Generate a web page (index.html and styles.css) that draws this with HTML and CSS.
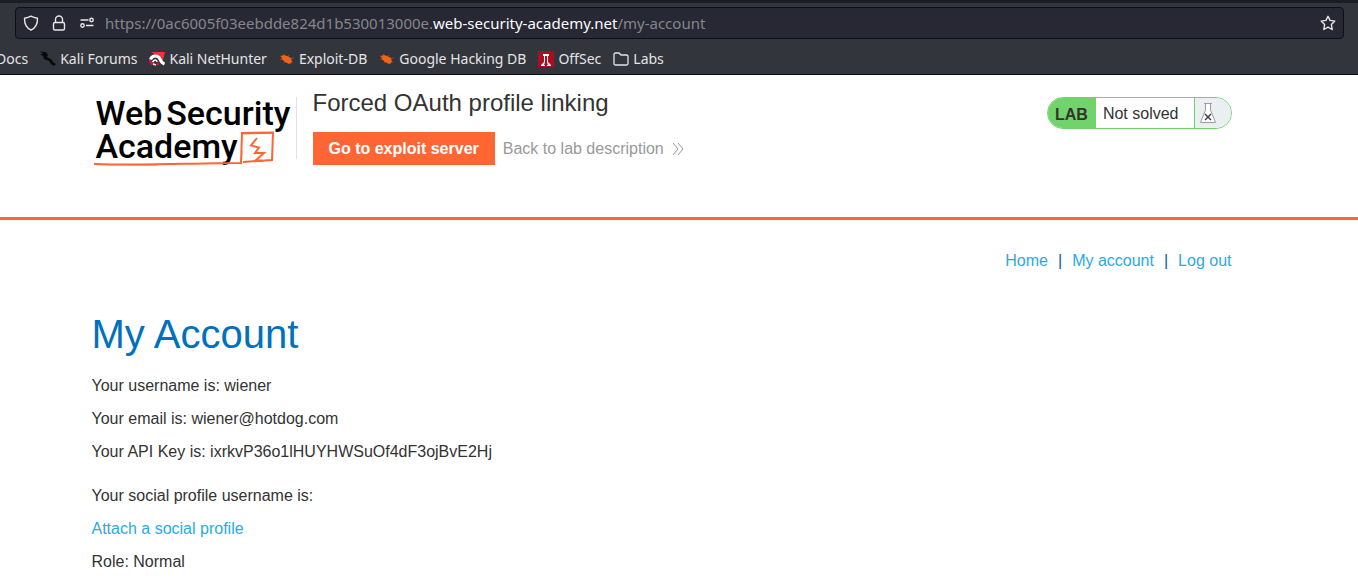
FILE: index.html
```html
<!DOCTYPE html>
<html lang="en">
<head>
<meta charset="utf-8">
<title>Forced OAuth profile linking</title>
<link rel="stylesheet" href="styles.css">
</head>
<body>
<div class="browser">
  <div class="address">
    <svg class="icon" viewBox="0 0 16 16" aria-hidden="true"><path d="M8 1.200C6 2.300 3.600 2.900 1.500 3.200C1.400 8.500 3 12.800 8 15C13 12.800 14.600 8.500 14.500 3.200C12.400 2.900 10 2.300 8 1.200Z"/></svg>
    <svg class="icon" viewBox="0 0 16 16" aria-hidden="true"><rect x="2.500" y="7.500" width="11" height="7.500" rx="1.500"/><path d="M4.500 7.500V4.500a3.500 3.500 0 0 1 7 0v3"/></svg>
    <svg class="icon" viewBox="0 0 16 16" aria-hidden="true"><path d="M1.500 5h8M7 10.500h7.500"/><circle cx="12.500" cy="5" r="1.700"/><circle cx="3.500" cy="10.500" r="1.700"/></svg>
    <div class="url" role="textbox" aria-label="Address" contenteditable="true" spellcheck="false">https://0ac6005f03eebdde824d1b530013000e.<span class="domain">web-security-academy.net</span>/my-account</div>
    <button class="star" type="button" aria-label="Bookmark this page"><svg class="icon" viewBox="0 0 16 16" aria-hidden="true"><path d="M8 1.300L10 5.400L14.800 6.100L11.400 9.500L12.200 14.500L8 12.200L3.800 14.500L4.600 9.500L1.200 6.100L6 5.400Z"/></svg></button>
  </div>
  <nav class="bookmarks" aria-label="Bookmarks">
    <a class="bookmark" href="#">Docs</a>
    <a class="bookmark" href="#"><svg viewBox="0 0 16 16" aria-hidden="true"><path fill="#08090b" d="M0 0L3 1L6 1L8 4L7 6L11 8L13 11L16 13L14 15L11 13L9 10L4 8L3 5L0 3L3 3Z"/></svg>Kali Forums</a>
    <a class="bookmark" href="#"><svg viewBox="0 0 16 16" aria-hidden="true"><path fill="#f0343d" d="M2 1H16L13 13L7 4Z"/><path fill="#d20f39" d="M0 7L6 14L10 11V14H2L0 11Z"/><path d="M1.500 8.500C3 4 9 4 11 8C12 11 13 12 15.500 13" fill="none" stroke="#fff" stroke-width="3"/><path d="M3.500 11C6 7.500 8 9 8 11M4 13L7 14" fill="none" stroke="#fff" stroke-width="1.500"/></svg>Kali NetHunter</a>
    <a class="bookmark" href="#"><svg viewBox="0 0 16 16" aria-hidden="true"><path d="M1 8L14 11M4 3L12 13M10 4L5 12M1 5L8 7M9 8L15 7" stroke="#8f4a2c"/><path fill="#ee6515" d="M2 5L5 4L8 5L12 7L13 11L10 13L6 11L3 8Z"/></svg>Exploit-DB</a>
    <a class="bookmark" href="#"><svg viewBox="0 0 16 16" aria-hidden="true"><path d="M1 8L14 11M4 3L12 13M10 4L5 12M1 5L8 7M9 8L15 7" stroke="#8f4a2c"/><path fill="#ee6515" d="M2 5L5 4L8 5L12 7L13 11L10 13L6 11L3 8Z"/></svg>Google Hacking DB</a>
    <a class="bookmark" href="#"><svg viewBox="0 0 16 16" aria-hidden="true"><path fill="#a90f21" d="M0 0h16v16H0z"/><path fill="#fff" d="M5 3h6v2h-1v6l3 3v1H9v-1h1l-1-3V5H7v6l-1 3h1v1H3v-1l3-3V5H5z"/></svg>OffSec</a>
    <a class="bookmark" href="#"><svg class="folder" viewBox="0 0 16 16" aria-hidden="true"><path d="M1 12.500V3.500Q1 2 2.500 2H6L8 4H13.500Q15 4 15 5.500V12.500Q15 14 13.500 14H2.500Q1 14 1 12.500Z"/></svg>Labs</a>
  </nav>
</div>
<header class="lab-header">
  <div class="container lab-banner">
    <a class="logo" href="#" aria-label="Web Security Academy">
      <span class="logo-line"><span>Web</span><span>Security</span></span>
      <span class="logo-line">Academy</span>
      <svg class="logo-mark" viewBox="0 0 205 76" aria-hidden="true"><path d="M2 73C55 75 100 72 149 72L150 42L181 41.500L180 69L151 71" stroke-width="2"/><path d="M165 47L159 54.500L167 56.500L163 62L172 62L164 69L171 70" stroke-width="2"/><path d="M8 73.500L65 74M149 43L182 42M150 60L149 73" stroke-width="1"/></svg>
    </a>
    <div class="lab-title">
      <h2>Forced OAuth profile linking</h2>
      <div class="lab-actions">
        <a class="exploit" href="#">Go to exploit server</a>
        <a class="back" href="#">Back to lab description <svg viewBox="0 0 12 12" aria-hidden="true"><path d="M1 0L6 6L1 12M6 0L11 6L6 12"/></svg></a>
      </div>
    </div>
    <div class="status">
      <span class="status-lab">LAB</span>
      <span class="status-text">Not solved</span>
      <span class="status-icon"><svg viewBox="0 0 18 22" aria-hidden="true"><path fill="#fff" stroke="#9a9c9e" d="M5 1.500H13M6.500 2V8L1.500 20.500H16.500L11.500 8V2"/><path fill="none" stroke="#444" stroke-width="1.500" d="M6 12L12 18M12 12L6 18"/></svg></span>
    </div>
  </div>
</header>
<main>
  <div class="container">
    <nav class="links" aria-label="Account"><a href="#">Home</a><span>|</span><a href="#">My account</a><span>|</span><a href="#">Log out</a></nav>
    <h1>My Account</h1>
    <div class="details">
      <p>Your username is: wiener</p>
      <p>Your email is: wiener@hotdog.com</p>
      <p>Your API Key is: ixrkvP36o1lHUYHWSuOf4dF3ojBvE2Hj</p>
    </div>
    <div class="details">
      <p>Your social profile username is:</p>
      <p><a href="#">Attach a social profile</a></p>
      <p>Role: Normal</p>
    </div>
  </div>
</main>
</body>
</html>
```
FILE: styles.css
```css
* { box-sizing: border-box; }
body {
  margin: 0;
  background: #fff;
  color: #333332;
  font: 16px/20px "Liberation Sans", Arial, sans-serif;
}
a { color: #29abe2; text-decoration: none; }
h1, h2, p { margin: 0; font-weight: 400; }

.browser {
  padding: 4px 14px 5px 15px;
  background: #33353c;
  border-top: 3px solid #1c1d22;
  border-bottom: 1px solid #0b0c0e;
  font: 15px/20px "Noto Sans", sans-serif;
  overflow: hidden;
}
.address {
  display: flex;
  align-items: center;
  gap: 12px;
  height: 32px;
  padding: 0 7px;
  background: #272833;
  border: 1px solid #0e0f14;
  border-radius: 4px;
}
.icon {
  display: block;
  flex: none;
  width: 16px;
  height: 16px;
  fill: none;
  stroke: #e6e6ea;
  stroke-width: 1.4;
  stroke-linejoin: round;
}
.url { flex: 1; margin-left: -2px; color: #85868d; white-space: nowrap; outline: none; }
.domain { color: #fbfbfe; }
.star { padding: 0; border: 0; background: none; }

.bookmarks {
  display: flex;
  align-items: center;
  gap: 12px;
  margin-left: -19px;
  padding-top: 10px;
  font-size: 14px;
}
.bookmark { display: flex; align-items: center; gap: 4px; color: #e4e4e6; white-space: nowrap; }
.bookmark svg { width: 16px; height: 16px; fill: none; }
.bookmark .folder { stroke: #e4e4e6; stroke-width: 1.3; }

.container { max-width: 1140px; margin: 0 auto; }
.lab-header, main { padding-right: 35px; }
.lab-header { border-bottom: 3px solid #ff6633; }
.lab-banner { display: flex; align-items: flex-start; padding: 14px 0 52px; }
.logo {
  position: relative;
  width: 205px;
  height: 62px;
  margin-top: 8px;
  padding-left: 4px;
  border-right: 1px solid #e0e2e4;
  color: #000;
  font: 500 34px/33px Roboto, sans-serif;
}
.logo-line { display: flex; gap: 4px; }
.logo-mark { position: absolute; left: 0; top: -6px; width: 205px; height: 76px; fill: none; stroke: #ff6633; }
.lab-title { flex: 1; margin-left: 16px; }
.lab-title h2 { font-size: 24px; line-height: 28px; }
.lab-actions { display: flex; align-items: center; gap: 8px; margin-top: 15px; }
.exploit { padding: 7px 16px 6px; background: #ff6633; color: #fff; font-weight: 700; }
.back { display: flex; align-items: center; gap: 8px; color: #999; }
.back svg { width: 12px; height: 12px; fill: none; stroke: #999; }
.status {
  display: flex;
  height: 32px;
  margin-top: 8px;
  overflow: hidden;
  border: 1px solid #72d36c;
  border-radius: 16px;
  line-height: 32px;
}
.status-lab { padding: 1px 8px 0 7px; background: #72d36c; font-weight: 700; }
.status-text { padding: 0 15px 0 7px; }
.status-icon { display: flex; align-items: center; width: 37px; padding-left: 4px; border-left: 1px solid #72d36c; background: #eaeff2; }
.status-icon svg { width: 18px; height: 22px; }

.links { display: flex; justify-content: flex-end; gap: 10px; padding-top: 31px; color: #0b5a9c; }
h1 { margin-top: 39px; color: #0071bc; font-size: 40px; line-height: 48px; }
.details { display: grid; gap: 13px; margin-top: 18px; }
.details + .details { margin-top: 24px; }
```
